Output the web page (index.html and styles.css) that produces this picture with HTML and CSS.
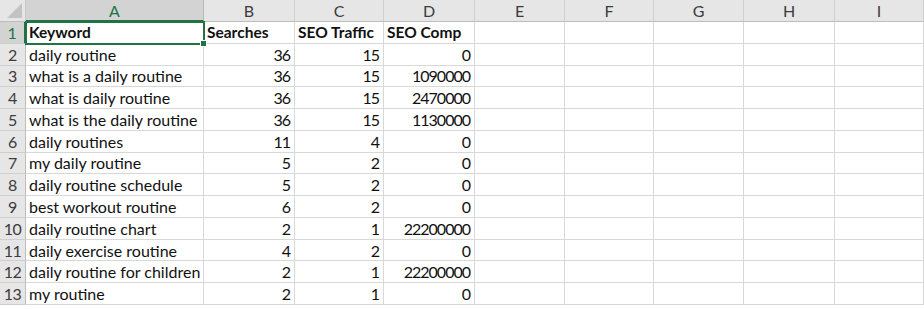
FILE: index.html
```html
<!DOCTYPE html>
<html>
<head>
<meta charset="utf-8">
<link rel="stylesheet" href="styles.css">
</head>
<body>
<div class="sheet">
  <div class="corner"><span class="tri"></span></div>
  <div class="ch sel">A</div><div class="ch">B</div><div class="ch">C</div><div class="ch">D</div><div class="ch">E</div><div class="ch">F</div><div class="ch">G</div><div class="ch">H</div><div class="ch">I</div>

  <div class="rh sel">1</div>
  <div class="c b active">Keyword<span class="handle"></span></div><div class="c b">Searches</div><div class="c b">SEO Traffic</div><div class="c b">SEO Comp</div><div class="c"></div><div class="c"></div><div class="c"></div><div class="c"></div><div class="c"></div>

  <div class="rh">2</div>
  <div class="c">daily routine</div><div class="c n">36</div><div class="c n">15</div><div class="c n">0</div><div class="c"></div><div class="c"></div><div class="c"></div><div class="c"></div><div class="c"></div>

  <div class="rh">3</div>
  <div class="c">what is a daily routine</div><div class="c n">36</div><div class="c n">15</div><div class="c n">1090000</div><div class="c"></div><div class="c"></div><div class="c"></div><div class="c"></div><div class="c"></div>

  <div class="rh">4</div>
  <div class="c">what is daily routine</div><div class="c n">36</div><div class="c n">15</div><div class="c n">2470000</div><div class="c"></div><div class="c"></div><div class="c"></div><div class="c"></div><div class="c"></div>

  <div class="rh">5</div>
  <div class="c">what is the daily routine</div><div class="c n">36</div><div class="c n">15</div><div class="c n">1130000</div><div class="c"></div><div class="c"></div><div class="c"></div><div class="c"></div><div class="c"></div>

  <div class="rh">6</div>
  <div class="c">daily routines</div><div class="c n">11</div><div class="c n">4</div><div class="c n">0</div><div class="c"></div><div class="c"></div><div class="c"></div><div class="c"></div><div class="c"></div>

  <div class="rh">7</div>
  <div class="c">my daily routine</div><div class="c n">5</div><div class="c n">2</div><div class="c n">0</div><div class="c"></div><div class="c"></div><div class="c"></div><div class="c"></div><div class="c"></div>

  <div class="rh">8</div>
  <div class="c">daily routine schedule</div><div class="c n">5</div><div class="c n">2</div><div class="c n">0</div><div class="c"></div><div class="c"></div><div class="c"></div><div class="c"></div><div class="c"></div>

  <div class="rh">9</div>
  <div class="c">best workout routine</div><div class="c n">6</div><div class="c n">2</div><div class="c n">0</div><div class="c"></div><div class="c"></div><div class="c"></div><div class="c"></div><div class="c"></div>

  <div class="rh">10</div>
  <div class="c">daily routine chart</div><div class="c n">2</div><div class="c n">1</div><div class="c n">22200000</div><div class="c"></div><div class="c"></div><div class="c"></div><div class="c"></div><div class="c"></div>

  <div class="rh">11</div>
  <div class="c">daily exercise routine</div><div class="c n">4</div><div class="c n">2</div><div class="c n">0</div><div class="c"></div><div class="c"></div><div class="c"></div><div class="c"></div><div class="c"></div>

  <div class="rh">12</div>
  <div class="c">daily routine for children</div><div class="c n">2</div><div class="c n">1</div><div class="c n">22200000</div><div class="c"></div><div class="c"></div><div class="c"></div><div class="c"></div><div class="c"></div>

  <div class="rh">13</div>
  <div class="c">my routine</div><div class="c n">2</div><div class="c n">1</div><div class="c n">0</div><div class="c"></div><div class="c"></div><div class="c"></div><div class="c"></div><div class="c"></div>
</div>
</body>
</html>
```

FILE: styles.css
```css
html, body {
  margin: 0;
  padding: 0;
  background: #ffffff;
}
.sheet {
  display: grid;
  grid-template-columns: 26px 178px 91px 89px 91px 90px 89px 90px 91px 89px;
  grid-template-rows: 22px repeat(13, 21.77px);
  width: 924px;
  font-family: Lato, "Open Sans", sans-serif;
  font-size: 16px;
  color: #111;
  overflow: hidden;
}
.corner {
  background: #e6e6e6;
  border-right: 1px solid #c6c6c6;
  border-bottom: 1px solid #bdbdbd;
  position: relative;
  box-sizing: border-box;
}
.tri {
  position: absolute;
  right: 3px;
  bottom: 3px;
  width: 0;
  height: 0;
  border-left: 15px solid transparent;
  border-bottom: 15px solid #c3c3c3;
}
.ch {
  background: #e6e6e6;
  border-right: 1px solid #cfcfcf;
  border-bottom: 1px solid #bdbdbd;
  box-sizing: border-box;
  display: flex;
  align-items: center;
  justify-content: center;
  color: #3c3c3c;
  font-size: 16px;
}
.ch.sel {
  background: #d3d3d3;
  color: #217346;
  border-bottom: 2px solid #217346;
  border-right-color: #b8b8b8;
}
.rh {
  background: #e6e6e6;
  border-right: 1px solid #bdbdbd;
  border-bottom: 1px solid #cfcfcf;
  box-sizing: border-box;
  display: flex;
  align-items: center;
  justify-content: center;
  color: #3c3c3c;
  font-size: 16px;
  letter-spacing: -0.5px;
}
.rh.sel {
  background: #d3d3d3;
  color: #217346;
  border-right: 2px solid #217346;
}
.c {
  border-right: 1px solid #d8d8d8;
  border-bottom: 1px solid #d8d8d8;
  box-sizing: border-box;
  display: flex;
  align-items: center;
  padding: 0 3px;
  white-space: nowrap;
  overflow: visible;
}
.c.n {
  justify-content: flex-end;
  letter-spacing: -1px;
  padding-right: 4px;
}
.c.b {
  font-weight: 700;
  font-size: 15.5px;
}
.c.active {
  position: relative;
  outline: 2px solid #217346;
  outline-offset: -1px;
  z-index: 1;
}
.handle {
  position: absolute;
  right: -4px;
  bottom: -4px;
  width: 5px;
  height: 5px;
  background: #217346;
  border: 1px solid #fff;
}
```
